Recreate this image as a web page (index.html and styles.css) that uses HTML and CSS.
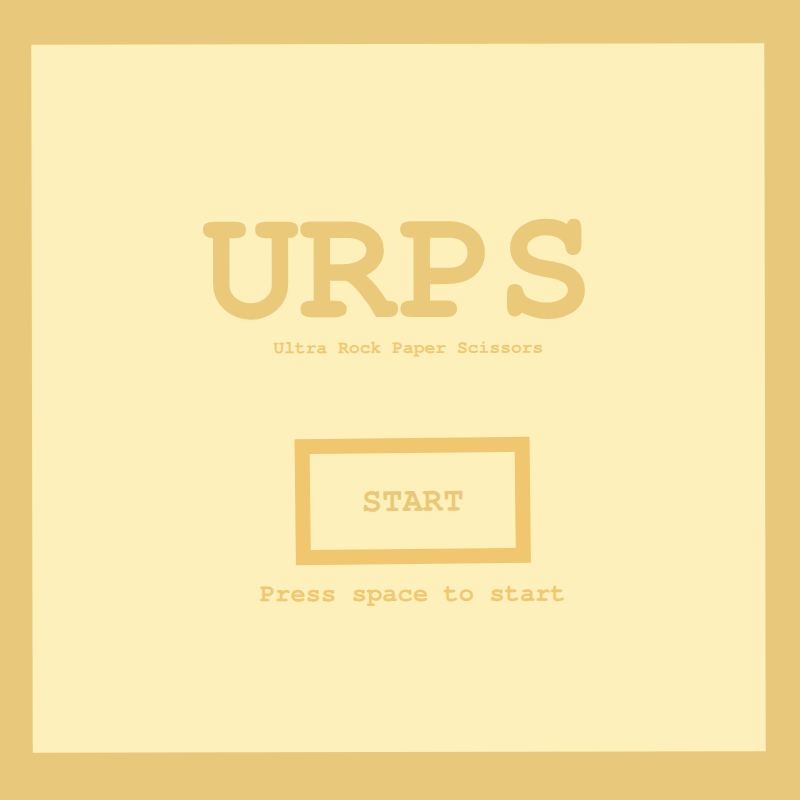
FILE: index.html
```html
<!DOCTYPE html>
<html>
<head>
<meta charset="utf-8">
<link rel="stylesheet" href="styles.css">
</head>
<body>
<main class="panel">
  <h1 class="title">URPS</h1>
  <p class="subtitle">Ultra Rock Paper Scissors</p>
  <button class="start">START</button>
  <p class="hint">Press space to start</p>
</main>
</body>
</html>
```
FILE: styles.css
```css
html, body {
  margin: 0;
  padding: 0;
  background: #e8c87a;
  height: 100%;
}
body {
  display: flex;
  align-items: flex-start;
  font-family: FreeMono, "Courier New", monospace;
}
.panel {
  box-sizing: border-box;
  width: 733px;
  height: 708px;
  margin: 44px 0 0 32px;
  background: #fdf0bb;
  transform: rotate(-0.12deg);
  display: flex;
  flex-direction: column;
  align-items: center;
  padding-top: 154px;
}
.title {
  margin: 0;
  font-size: 164px;
  line-height: 140px;
  font-weight: bold;
  color: #eac97a;
}
.subtitle {
  margin: 0;
  margin-left: 20px;
  font-size: 18px;
  line-height: 20px;
  font-weight: bold;
  color: #f0c870;
}
.start {
  margin-top: 80px;
  margin-left: 28px;
  box-sizing: border-box;
  width: 235px;
  height: 126px;
  border: 15px solid #f0c76e;
  background: transparent;
  font-family: inherit;
  font-size: 34px;
  font-weight: bold;
  color: #ebc878;
  transform: rotate(-0.5deg);
  padding: 0;
}
.hint {
  margin: 16px 0 0 28px;
  font-size: 25.5px;
  line-height: 28px;
  font-weight: bold;
  color: #f0c870;
}
```
